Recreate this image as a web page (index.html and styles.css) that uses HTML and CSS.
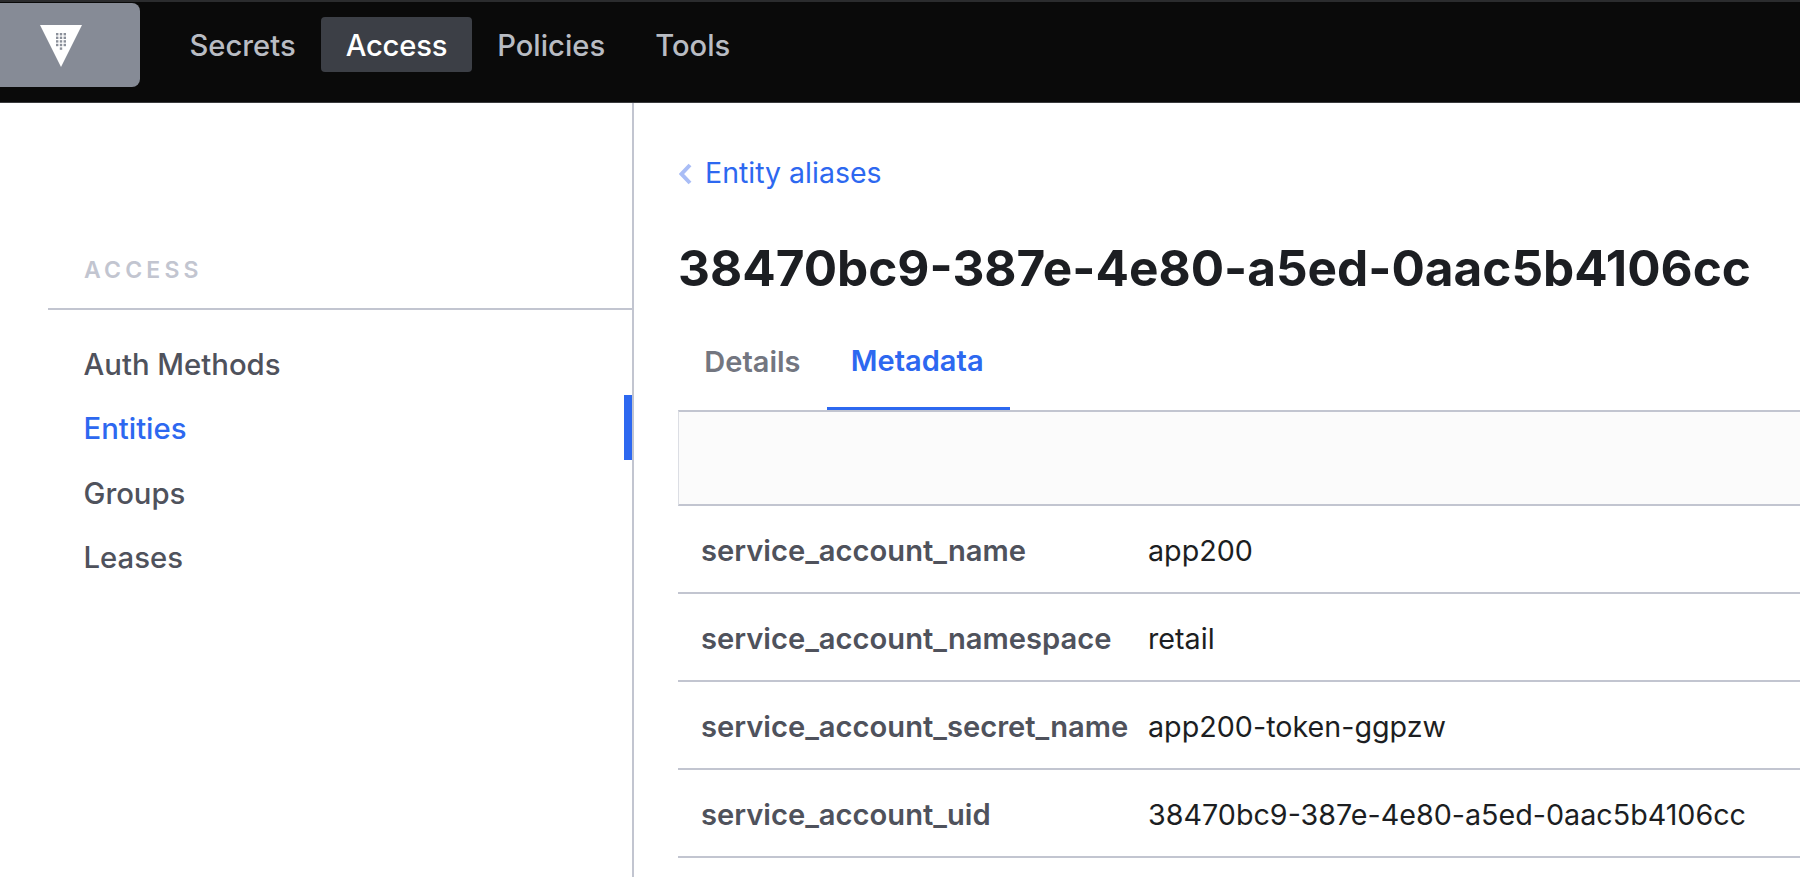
FILE: index.html
```html
<!DOCTYPE html>
<html lang="en">
<head>
    <meta charset="UTF-8">
    <meta name="viewport" content="width=device-width, initial-scale=1.0">
    <title>Entity alias</title>
    <link rel="stylesheet" href="styles.css">
</head>
<body>
    <header class="top-bar">
        <a class="logo-box" href="#">
            <svg class="logo" viewBox="0 0 42 42" width="42" height="42">
                <polygon points="0,0 42,0 21,42" fill="#ffffff"/>
                <g fill="#8b909a">
                    <rect x="16" y="8" width="2.4" height="2.4"/><rect x="19.8" y="8" width="2.4" height="2.4"/><rect x="23.6" y="8" width="2.4" height="2.4"/>
                    <rect x="16" y="11.6" width="2.4" height="2.4"/><rect x="19.8" y="11.6" width="2.4" height="2.4"/><rect x="23.6" y="11.6" width="2.4" height="2.4"/>
                    <rect x="16" y="15.2" width="2.4" height="2.4"/><rect x="19.8" y="15.2" width="2.4" height="2.4"/><rect x="23.6" y="15.2" width="2.4" height="2.4"/>
                    <rect x="16" y="18.8" width="2.4" height="2.4"/><rect x="19.8" y="18.8" width="2.4" height="2.4"/><rect x="23.6" y="18.8" width="2.4" height="2.4"/>
                    <rect x="19.8" y="22.4" width="2.4" height="2.4"/>
                </g>
            </svg>
        </a>
        <nav class="top-nav">
            <a href="#" class="top-link">Secrets</a>
            <a href="#" class="top-link active">Access</a>
            <a href="#" class="top-link">Policies</a>
            <a href="#" class="top-link">Tools</a>
        </nav>
    </header>

    <div class="page">
        <aside class="sidebar">
            <h4 class="side-title">ACCESS</h4>
            <ul class="side-menu">
                <li><a href="#">Auth Methods</a></li>
                <li class="current"><a href="#">Entities</a></li>
                <li><a href="#">Groups</a></li>
                <li><a href="#">Leases</a></li>
            </ul>
        </aside>

        <main class="content">
            <a href="#" class="back-link">
                <svg class="chevron" viewBox="0 0 13 22" width="13" height="22">
                    <polyline points="11,2 2.5,11 11,20" fill="none" stroke="#a9bdf6" stroke-width="4"/>
                </svg>
                Entity aliases
            </a>
            <h1 class="page-title">38470bc9-387e-4e80-a5ed-0aac5b4106cc</h1>

            <div class="tabs">
                <a href="#" class="tab">Details</a>
                <a href="#" class="tab selected">Metadata</a>
            </div>
            <div class="toolbar"></div>

            <div class="info-row">
                <div class="info-label">service_account_name</div>
                <div class="info-value">app200</div>
            </div>
            <div class="info-row">
                <div class="info-label">service_account_namespace</div>
                <div class="info-value">retail</div>
            </div>
            <div class="info-row">
                <div class="info-label">service_account_secret_name</div>
                <div class="info-value">app200-token-ggpzw</div>
            </div>
            <div class="info-row">
                <div class="info-label">service_account_uid</div>
                <div class="info-value">38470bc9-387e-4e80-a5ed-0aac5b4106cc</div>
            </div>
        </main>
    </div>
</body>
</html>
```

FILE: styles.css
```css
html, body {
    height: 100%;
}
body {
    font-family: Inter, "Liberation Sans", sans-serif;
    margin: 0;
    padding: 0;
    background: #ffffff;
    overflow: hidden;
    display: flex;
    flex-direction: column;
}
a {
    text-decoration: none;
    color: inherit;
}

/* top bar */
.top-bar {
    height: 103px;
    box-sizing: border-box;
    flex: none;
    display: flex;
    align-items: flex-start;
    background: #0a0a0a;
    border-top: 2px solid #2b2c2e;
    border-bottom: 1px solid #3a3b3e;
}
.logo-box {
    width: 140px;
    height: 84px;
    margin-top: 1px;
    box-sizing: border-box;
    padding: 2px 18px 0 0;
    display: flex;
    align-items: center;
    justify-content: center;
    background: #868b96;
    border-radius: 0 8px 8px 0;
}
.top-nav {
    display: flex;
    align-items: center;
    gap: 1px;
    margin-left: 25px;
    margin-top: 15px;
}
.top-link {
    display: block;
    height: 55px;
    line-height: 57px;
    padding: 0 24.5px;
    font-size: 29.2px;
    font-weight: 500;
    color: #b9bcc3;
    border-radius: 4px;
}
.top-link.active {
    background: #3c3f46;
    color: #ffffff;
    letter-spacing: -0.2px;
}

/* sidebar */
.page {
    flex: 1;
    display: flex;
    min-height: 0;
}
.sidebar {
    width: 634px;
    box-sizing: border-box;
    flex: none;
    padding: 152px 0 0 48px;
    border-right: 2px solid #c2c5d0;
}
.side-title {
    margin: 0;
    padding: 0 0 23px 36px;
    font-size: 23px;
    line-height: 30px;
    font-weight: 600;
    letter-spacing: 4.2px;
    color: #c2c5d0;
    border-bottom: 2px solid #c2c5d0;
}
.side-menu {
    list-style: none;
    margin: 20.5px 0 0;
    padding: 0;
}
.side-menu li {
    height: 64.5px;
    line-height: 67px;
    padding-left: 35.5px;
    font-size: 29.3px;
    font-weight: 500;
    color: #4f525c;
    box-sizing: border-box;
}
.side-menu li.current {
    color: #2d68f0;
    border-right: 8px solid #2d68f0;
}

/* main content */
.content {
    flex: 1;
    min-width: 0;
    padding: 51px 0 0 44px;
}
.back-link {
    display: flex;
    align-items: center;
    gap: 13px;
    height: 36px;
    font-size: 28.5px;
    color: #2d68f0;
}
.chevron {
    margin: 3px 0 0 1px;
}
.page-title {
    margin: 50px 0 0;
    font-size: 49.5px;
    line-height: 56px;
    font-weight: 700;
    color: #1c1e22;
    white-space: nowrap;
}
.tabs {
    display: flex;
    height: 93px;
    margin-top: 21px;
    box-sizing: border-box;
}
.tab {
    display: flex;
    align-items: center;
    padding: 0 26.3px 4px;
    height: 100%;
    box-sizing: border-box;
    font-size: 29px;
    font-weight: 600;
    color: #737680;
}
.tab.selected {
    padding-left: 24px;
    color: #2d68f0;
    border-bottom: 3px solid #2d68f0;
}
.toolbar {
    height: 96px;
    box-sizing: border-box;
    background: #fbfbfb;
    border-top: 2px solid #c2c5d0;
    border-left: 1px solid #dcdee4;
    border-bottom: 2px solid #c2c5d0;
}
.info-row {
    display: flex;
    align-items: center;
    height: 88px;
    box-sizing: border-box;
    padding: 3px 0 0 23px;
    border-bottom: 2px solid #c2c5d0;
    font-size: 28.7px;
}
.info-label {
    width: 447px;
    flex: none;
    font-size: 29.15px;
    font-weight: 600;
    color: #4f525c;
    white-space: nowrap;
}
.info-value {
    color: #1c1e22;
    white-space: nowrap;
}
```
